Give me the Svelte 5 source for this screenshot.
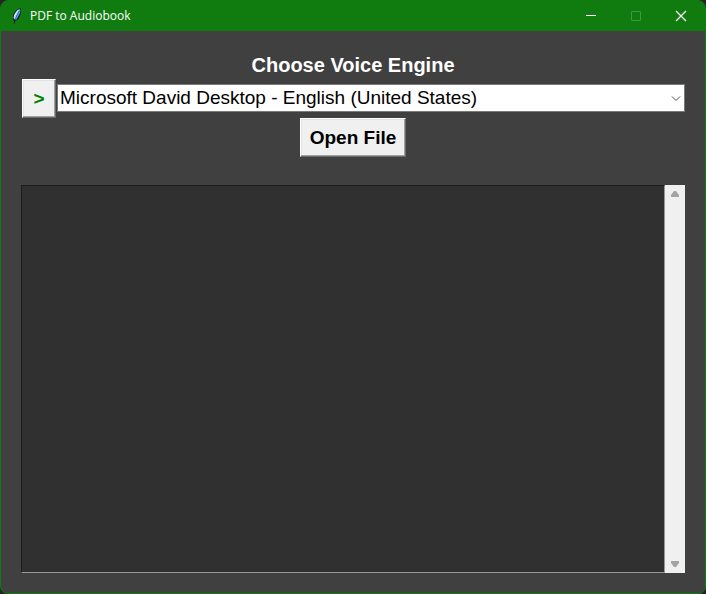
<script>
  const voices = [
    'Microsoft David Desktop - English (United States)'
  ];
  let voice = $state(voices[0]);
  let text = $state('');
</script>

<div class="window">
  <header class="titlebar">
    <svg class="feather" width="10" height="16" viewBox="0 0 10 16" aria-hidden="true">
      <path d="M7 0.500H9V4L8 8L6 11.500L4 12.500L3 13V15.500H2V13L1 11V8L2 5L4.500 2Z" fill="#0a1c28" />
      <path d="M7.500 1L8.500 2L8 5L6 9L4 12L2.500 11L4 7L6 2.500Z" fill="#5b9bea" />
      <path d="M7.500 1L5 2.500L2.500 6L1.500 9.500L2.500 11.500L4.500 7Z" fill="#c4e2f6" />
      <path d="M7.500 3L5 7L3 12" fill="none" stroke="#24528c" stroke-width="0.600" />
    </svg>
    <h1>PDF to Audiobook</h1>
    <div class="controls">
      <button aria-label="Minimize">
        <svg width="10" height="10" viewBox="0 0 10 10"><path d="M0 4.500H10" /></svg>
      </button>
      <button aria-label="Maximize" disabled>
        <svg width="10" height="10" viewBox="0 0 10 10"><rect x="0.500" y="0.500" width="9" height="9" rx="0.500" /></svg>
      </button>
      <button aria-label="Close">
        <svg width="10" height="10" viewBox="0 0 10 10"><path d="M0 0L10 10M10 0L0 10" stroke-width="1.300" /></svg>
      </button>
    </div>
  </header>

  <main>
    <label class="heading" for="voice">Choose Voice Engine</label>
    <div class="voice-row">
      <button class="raised play" aria-label="Play sample">&gt;</button>
      <div class="combo">
        <select id="voice" bind:value={voice}>
          {#each voices as name}
            <option value={name}>{name}</option>
          {/each}
        </select>
        <svg class="chevron" width="10" height="6" viewBox="0 0 10 6" aria-hidden="true">
          <path d="M1 0.500L5 4.500L9 0.500" />
        </svg>
      </div>
    </div>
    <button class="raised open">Open File</button>

    <div class="editor">
      <textarea aria-label="Text" bind:value={text}></textarea>
      <div class="scrollbar">
        <button aria-label="Scroll up">
          <svg width="8" height="6" viewBox="0 0 8 6"><path d="M3 0H5L8 4V6H0V4Z" /></svg>
        </button>
        <button aria-label="Scroll down">
          <svg width="8" height="6" viewBox="0 0 8 6"><path d="M0 0H8V2L5 6H3L0 2Z" /></svg>
        </button>
      </div>
    </div>
  </main>
</div>

<style>
  :global(body) {
    margin: 0;
    background: #252525;
  }

  .window {
    box-sizing: border-box;
    min-height: 100vh;
    display: flex;
    flex-direction: column;
    border: 1px solid #107c10;
    border-radius: 8px;
    overflow: hidden;
    background: #404040;
    font-family: "Liberation Sans", Arial, sans-serif;
  }

  button {
    margin: 0;
    padding: 0;
    border: 0;
    background: none;
    font-family: inherit;
  }

  .titlebar {
    height: 30px;
    display: flex;
    align-items: center;
    padding: 0 2px 0 11px;
    background: #107c10;
  }

  .feather {
    margin-right: 8px;
  }

  h1 {
    flex: 1;
    margin: 0;
    font: 400 12px/16px "Open Sans", "Noto Sans", sans-serif;
    color: #fff;
  }

  .controls {
    display: flex;
    height: 28px;
  }

  .controls button {
    width: 45px;
    display: flex;
    align-items: center;
    justify-content: center;
  }

  .controls svg {
    fill: none;
    stroke: #fff;
    overflow: visible;
  }

  .controls button:disabled svg {
    stroke: #439643;
  }

  main {
    flex: 1;
    display: flex;
    flex-direction: column;
    align-items: center;
    padding: 20px;
  }

  .heading {
    padding: 3px 0;
    font-size: 20px;
    font-weight: 700;
    line-height: 22px;
    color: #fff;
  }

  .voice-row {
    align-self: stretch;
    display: flex;
    align-items: flex-start;
    gap: 1px;
    padding-left: 1px;
  }

  .raised {
    box-sizing: border-box;
    height: 39px;
    border: 1px solid;
    border-color: #fff #696969 #696969 #fff;
    box-shadow: inset -1px -1px #a0a0a0, inset 1px 1px #e3e3e3;
    background: #f0f0f0;
    font-size: 19px;
    font-weight: 700;
    line-height: 22px;
    color: #000;
  }

  .play {
    width: 34px;
    color: #008000;
  }

  .open {
    padding: 0 9px;
  }

  .combo {
    flex: 1;
    position: relative;
    margin-top: 5px;
  }

  select {
    appearance: none;
    display: block;
    box-sizing: border-box;
    width: 100%;
    height: 28px;
    margin: 0;
    padding: 0 24px 0 2px;
    border: 1px solid #7a7a7a;
    border-radius: 0;
    background: #fff;
    font: 400 19px/22px "Liberation Sans", Arial, sans-serif;
    color: #000;
  }

  .chevron {
    position: absolute;
    right: 4px;
    top: 12px;
    fill: none;
    stroke: #505050;
    pointer-events: none;
  }

  .editor {
    flex: 1;
    align-self: stretch;
    display: flex;
    margin-top: 28px;
  }

  textarea {
    flex: 1;
    box-sizing: border-box;
    min-height: 120px;
    margin: 0;
    padding: 2px;
    border: 1px solid;
    border-color: #1c1c1c #989898 #989898 #1c1c1c;
    border-radius: 0;
    outline: 0;
    resize: none;
    background: #303030;
    font: 400 19px/22px "Liberation Sans", Arial, sans-serif;
    color: #fff;
  }

  .scrollbar {
    width: 20px;
    display: flex;
    flex-direction: column;
    justify-content: space-between;
    background: #f0f0f0;
  }

  .scrollbar button {
    height: 18px;
    display: flex;
    align-items: center;
    justify-content: center;
  }

  .scrollbar svg {
    fill: #a3a3a3;
  }
</style>
